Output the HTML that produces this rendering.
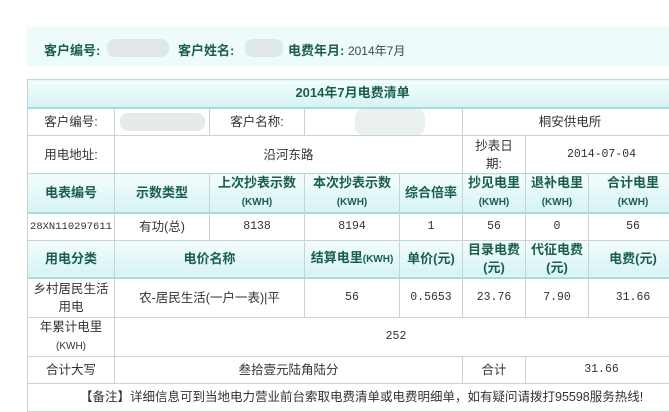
<!DOCTYPE html>
<html><head><meta charset="utf-8"><style>
body{margin:0;width:669px;height:411px;overflow:hidden;background:#fff;font-family:"Liberation Sans","Noto Sans CJK SC",sans-serif;font-size:13px;color:#333}
.top{position:absolute;left:27px;top:27px;width:642px;height:39px;background:#eefbfb}
.top span{position:absolute;top:13px;font-weight:bold;color:#1b5e4e;font-size:13px}
.blur{position:absolute;top:12px;height:18px;background:#dfe8e6;border-radius:8px}
table{position:absolute;left:27px;top:79px;border-collapse:collapse;table-layout:fixed;width:650px}
td{border:1px solid #c8d4d2;text-align:center;padding:0;line-height:18px;font-size:12.5px}
.h td,.t td{background:linear-gradient(#f3fdfd,#d6f3f3);color:#1b5e4e;font-weight:bold;font-size:13px}
.h td{border-bottom:2px solid #a9dcdc}
.t td{border-bottom:2px solid #a9dcdc}
small{font-size:10px}
.m{font-family:"Liberation Mono","Noto Sans CJK SC",monospace;font-size:11.5px}
</style></head><body>
<div class="top">
<span style="left:17px">客户编号:</span><div class="blur" style="left:80px;width:62px"></div>
<span style="left:151px">客户姓名:</span><div class="blur" style="left:218px;width:38px"></div>
<span style="left:261px">电费年月: <b style="font-weight:normal;color:#444;font-size:12px">2014年7月</b></span>
</div>
<table>
<colgroup><col style="width:87px"><col style="width:95px"><col style="width:95px"><col style="width:95px"><col style="width:63px"><col style="width:63px"><col style="width:63px"><col style="width:89px"></colgroup>
<tr class="t" style="height:28px"><td colspan="8">2014年7月电费清单</td></tr>
<tr style="height:28px"><td>客户编号:</td><td><div style="margin:0 auto;width:85px;height:18px;background:#e4ebea;border-radius:8px"></div></td><td>客户名称:</td><td colspan="2"><div style="margin:0 0 0 50px;width:70px;height:26px;background:#eaf0ef;border-radius:8px"></div></td><td colspan="3">桐安供电所</td></tr>
<tr style="height:38px"><td>用电地址:</td><td colspan="4">沿河东路</td><td>抄表日<br>期:</td><td colspan="2" class="m">2014-07-04</td></tr>
<tr class="h" style="height:39px"><td>电表编号</td><td>示数类型</td><td>上次抄表示数<br><small>(KWH)</small></td><td>本次抄表示数<br><small>(KWH)</small></td><td>综合倍率</td><td>抄见电里<br><small>(KWH)</small></td><td>退补电里<br><small>(KWH)</small></td><td>合计电里<br><small>(KWH)</small></td></tr>
<tr style="height:27px"><td class="m" style="font-size:10.5px">28XN110297611</td><td>有功(总)</td><td class="m">8138</td><td class="m">8194</td><td class="m">1</td><td class="m">56</td><td class="m">0</td><td class="m">56</td></tr>
<tr class="h" style="height:38px"><td>用电分类</td><td colspan="2">电价名称</td><td>结算电里<small>(KWH)</small></td><td>单价(元)</td><td>目录电费<br>(元)</td><td>代征电费<br>(元)</td><td>电费(元)</td></tr>
<tr style="height:39px"><td>乡村居民生活<br>用电</td><td colspan="2">农-居民生活(一户一表)|平</td><td class="m">56</td><td class="m">0.5653</td><td class="m">23.76</td><td class="m">7.90</td><td class="m">31.66</td></tr>
<tr style="height:39px"><td>年累计电里<br><small>(KWH)</small></td><td colspan="7" class="m">252</td></tr>
<tr style="height:27px"><td>合计大写</td><td colspan="4">叁拾壹元陆角陆分</td><td>合计</td><td colspan="2" class="m">31.66</td></tr>
<tr style="height:28px"><td colspan="8" style="text-align:left;padding-left:52px">【备注】详细信息可到当地电力营业前台索取电费清单或电费明细单，如有疑问请拨打95598服务热线!</td></tr>
</table>
</body></html>
